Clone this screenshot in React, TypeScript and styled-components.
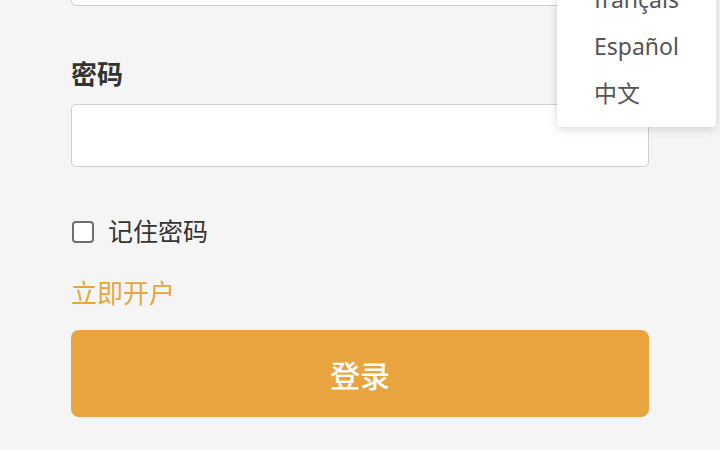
import React, { FC, useState } from "react";
import styled, { createGlobalStyle } from "styled-components";

const accent = "#e8a53f";
const fontStack = `"Noto Sans", "Noto Sans CJK SC", sans-serif`;

const GlobalStyle = createGlobalStyle`
  html, body {
    margin: 0;
    padding: 0;
    background: #f5f5f5;
    overflow: hidden;
  }
  body {
    font-family: ${fontStack};
    color: #333;
  }
`;

const Page = styled.div`
  position: relative;
  width: 720px;
  height: 450px;
  overflow: hidden;
  background: #f5f5f5;
`;

// the form is scrolled: only the bottom of the account input is still visible
const Form = styled.form`
  display: flex;
  flex-direction: column;
  margin: -57px 71px 0;
`;

const Field = styled.div`
  display: flex;
  flex-direction: column;
  & + & {
    margin-top: 49px;
  }
`;

const Label = styled.label`
  font-size: 26px;
  line-height: 39px;
  font-weight: 700;
  color: #333;
  margin-bottom: 10px;
`;

const TextInput = styled.input`
  box-sizing: border-box;
  height: 63px;
  width: 100%;
  border: 1px solid #cfcfcf;
  border-radius: 5px;
  background: #fff;
  font-family: ${fontStack};
  font-size: 24px;
  padding: 0 16px;
  outline: none;
`;

const RememberRow = styled.label`
  display: flex;
  align-items: center;
  gap: 14px;
  margin-top: 45px;
  font-size: 25px;
  line-height: 39px;
  color: #333;
  cursor: pointer;
`;

const CheckBox = styled.input.attrs({ type: "checkbox" })`
  appearance: none;
  box-sizing: border-box;
  width: 22px;
  height: 22px;
  margin: 0 0 0 1px;
  border: 2px solid #707070;
  border-radius: 4px;
  background: #fff;
  &:checked {
    background: ${accent};
    border-color: ${accent};
  }
`;

const SignUpLink = styled.a`
  display: block;
  margin-top: 23px;
  font-size: 26px;
  line-height: 39px;
  color: ${accent};
  text-decoration: none;
  cursor: pointer;
`;

const SubmitButton = styled.button`
  margin-top: 17px;
  height: 87px;
  border: none;
  border-radius: 8px;
  background: ${accent};
  color: #fff;
  font-family: ${fontStack};
  font-size: 30px;
  font-weight: 500;
  cursor: pointer;
`;

const LangMenu = styled.ul`
  position: absolute;
  top: -34px;
  left: 557px;
  right: 4px;
  margin: 0;
  padding: 10px 0;
  list-style: none;
  background: #fff;
  border-radius: 0 0 4px 4px;
  box-shadow: 0 2px 10px rgba(0, 0, 0, 0.16);
`;

const LangItem = styled.li<{ active?: boolean }>`
  height: 47px;
  line-height: 47px;
  padding-left: 37px;
  font-size: 23px;
  color: ${({ active }) => (active ? accent : "#555")};
  cursor: pointer;
`;

const languages = ["français", "Español", "中文"];

const App: FC = () => {
  const [remember, setRemember] = useState(false);

  return (
    <>
      <GlobalStyle />
      <Page>
        <Form onSubmit={(e) => e.preventDefault()}>
          <Field>
            <TextInput type="text" aria-label="账号" />
          </Field>
          <Field>
            <Label>密码</Label>
            <TextInput type="password" />
          </Field>
          <RememberRow>
            <CheckBox
              checked={remember}
              onChange={(e) => setRemember(e.target.checked)}
            />
            记住密码
          </RememberRow>
          <SignUpLink>立即开户</SignUpLink>
          <SubmitButton type="submit">登录</SubmitButton>
        </Form>
        <LangMenu>
          {languages.map((lang) => (
            <LangItem key={lang}>{lang}</LangItem>
          ))}
        </LangMenu>
      </Page>
    </>
  );
};

export default App;
